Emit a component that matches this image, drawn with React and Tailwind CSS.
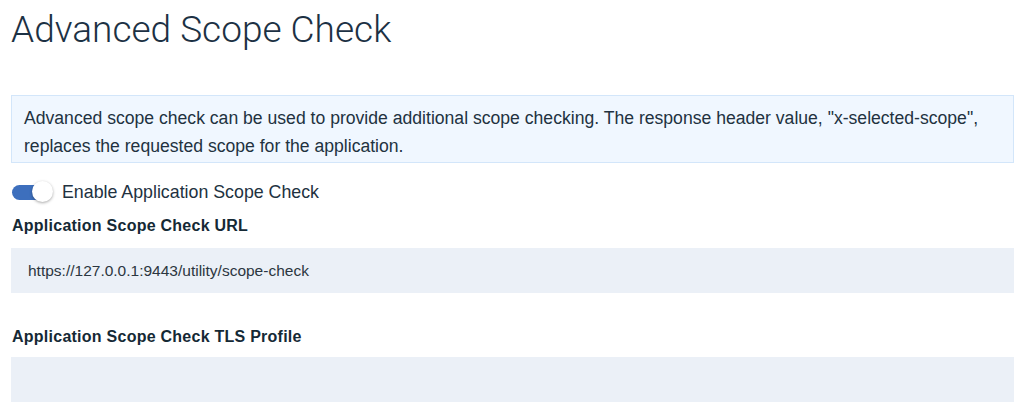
export default function App() {
  return (
    <div className="bg-white w-[1024px] h-[413px] overflow-hidden pl-[11px] pr-[10px] text-[#1d2f3e]" style={{ fontFamily: '"Liberation Sans", Arial, sans-serif' }}>
      <h1 className="pt-[9px] text-[37px] leading-[42px] font-light text-[#1c3144]" style={{ fontFamily: 'Roboto, "Liberation Sans", sans-serif' }}>
        Advanced Scope Check
      </h1>
      <div className="mt-[44px] h-[68px] border border-[#d3e6fa] bg-[#f0f7ff] px-[12px] pt-[8px] text-[17.6px] leading-[28px] text-[#22323f]">
        Advanced scope check can be used to provide additional scope checking. The response header value, "x-selected-scope", replaces the requested scope for the application.
      </div>
      <div className="mt-[18px] flex items-center h-[22px]">
        <div className="relative w-[42px] h-[22px] flex items-center">
          <div className="w-[40px] h-[15px] rounded-full bg-[#3d6fbd] ml-[1px]" />
          <div className="absolute left-[21px] top-[0px] w-[21px] h-[21px] rounded-full bg-white shadow-[0_1px_3px_rgba(0,0,0,0.35)]" />
        </div>
        <span className="ml-[9px] text-[17.8px] leading-[22px] text-[#22323f]">Enable Application Scope Check</span>
      </div>
      <div className="mt-[14px] text-[16px] tracking-[0.25px] leading-[18px] font-bold text-[#152935] pl-[1px]">Application Scope Check URL</div>
      <div className="mt-[13px] h-[45px] bg-[#ebf0f7] flex items-center pl-[17px] text-[15.5px] text-[#2b3640]">
        https://127.0.0.1:9443/utility/scope-check
      </div>
      <div className="mt-[35px] text-[16px] tracking-[0.25px] leading-[18px] font-bold text-[#152935] pl-[1px]">Application Scope Check TLS Profile</div>
      <div className="mt-[11px] h-[45px] bg-[#ebf0f7]" />
    </div>
  );
}
